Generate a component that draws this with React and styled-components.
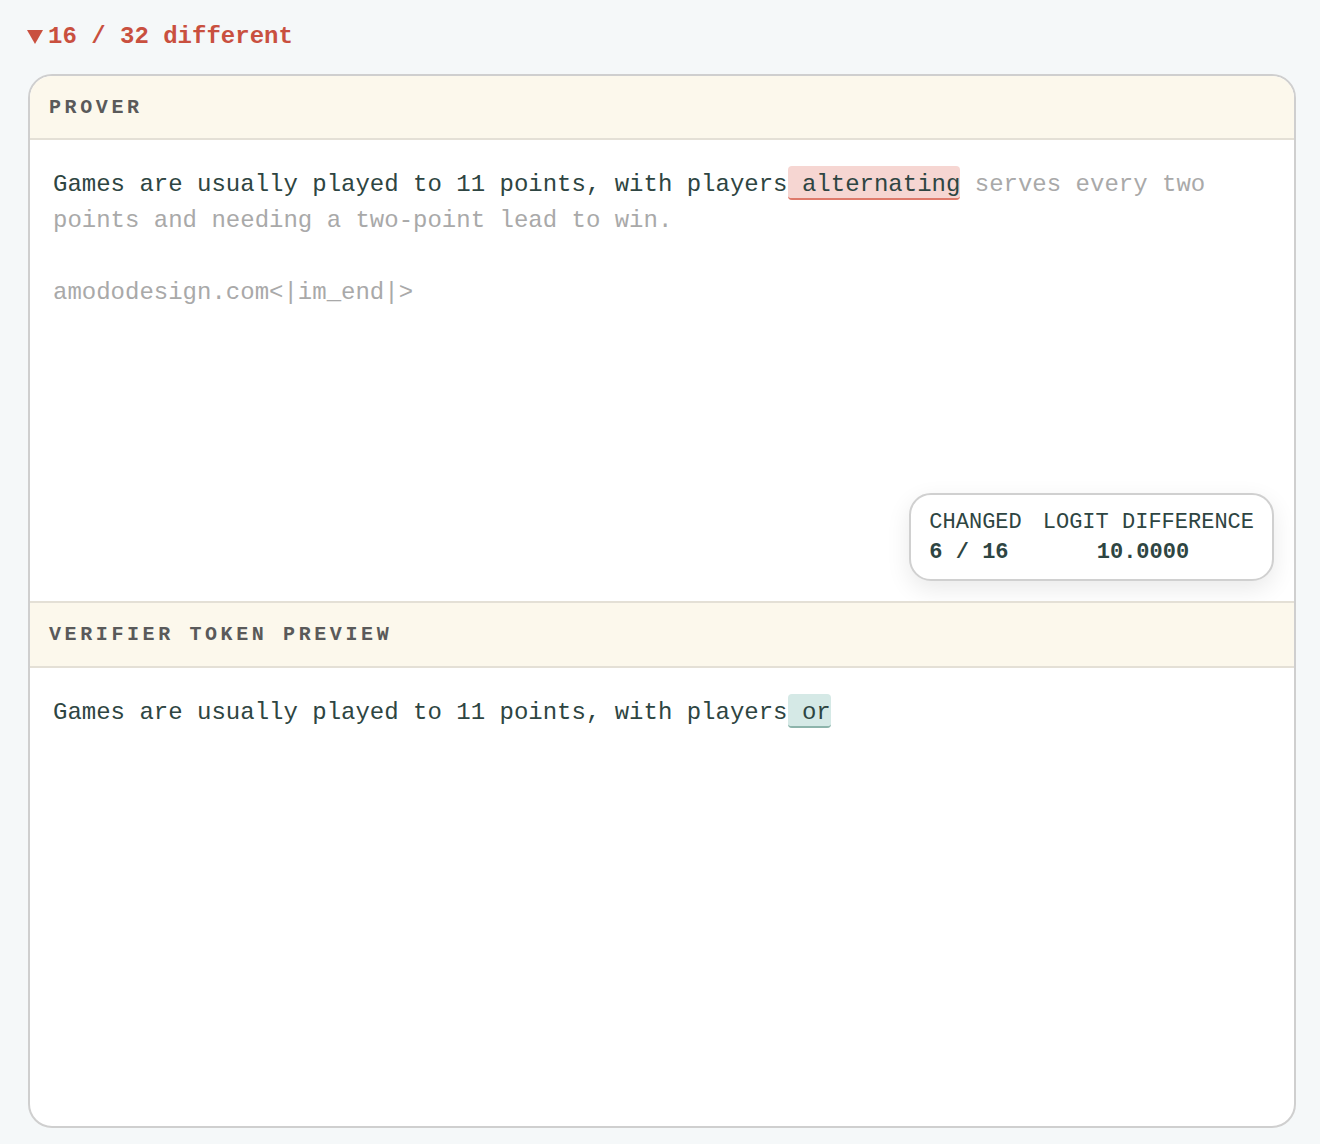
import React from 'react';
import styled, { createGlobalStyle } from 'styled-components';

const GlobalStyle = createGlobalStyle`
  html, body {
    margin: 0;
    padding: 0;
    background: #f5f8f9;
  }
  body {
    font-family: "Liberation Mono", "DejaVu Sans Mono", monospace;
    color: #2e4542;
  }
`;

const Page = styled.div`
  height: 100vh;
  box-sizing: border-box;
  display: flex;
  flex-direction: column;
  padding: 19px 24px 16px 28px;
`;

const Summary = styled.div`
  display: flex;
  align-items: center;
  height: 36px;
  margin: 0 0 19px -1px;
  color: #c9503f;
  font-size: 24px;
  font-weight: 700;
  line-height: 36px;
`;

const Caret = styled.span`
  width: 0;
  height: 0;
  border-left: 8px solid transparent;
  border-right: 8px solid transparent;
  border-top: 14px solid #c9503f;
  margin: 0 5px 0 0;
`;

const Card = styled.div`
  flex: 1;
  min-height: 0;
  display: flex;
  flex-direction: column;
  background: #fff;
  border: 2px solid #cfcfcf;
  border-radius: 24px;
  overflow: hidden;
`;

const Section = styled.section`
  flex: 1 1 0;
  min-height: 0;
  display: flex;
  flex-direction: column;
  position: relative;
`;

const Header = styled.div`
  flex: none;
  height: ${p => (p.divided ? 63 : 62)}px;
  display: flex;
  align-items: center;
  padding: 0 19px;
  background: #fcf8ec;
  border-top: ${p => (p.divided ? '2px solid #e4e0d6' : 'none')};
  border-bottom: 2px solid #e4e0d6;
  color: #5a5a5a;
  font-size: 20px;
  font-weight: 700;
  letter-spacing: 3.6px;
`;

const Body = styled.div`
  flex: 1;
  padding: 27px 23px;
  font-size: 24px;
  line-height: 36px;
  white-space: pre-wrap;
`;

const Faded = styled.span`
  color: #a9a9a9;
`;

const Token = styled.span`
  background: ${p => (p.tone === 'red' ? '#f6d6d2' : '#d5e9e6')};
  border-bottom: 2px solid ${p => (p.tone === 'red' ? '#de7a6b' : '#8db4ab')};
  border-radius: 4px;
  padding-top: 5px;
`;

const Stats = styled.div`
  position: absolute;
  right: 20px;
  bottom: 20px;
  display: grid;
  grid-template-columns: auto auto;
  column-gap: 21px;
  padding: 13px 18px 11px;
  background: #fff;
  border: 2px solid #d0d0d0;
  border-radius: 22px;
  box-shadow: 0 8px 24px rgba(0, 0, 0, 0.09);
  font-size: 22px;
  line-height: 30px;
`;

const Label = styled.div`
  color: #2e4542;
`;

const Value = styled.div`
  font-weight: 700;
  padding-left: ${p => p.indent || 0}px;
`;

export default function App() {
  return (
    <>
      <GlobalStyle />
      <Page>
        <Summary>
          <Caret />
          16 / 32 different
        </Summary>
        <Card>
          <Section>
            <Header>PROVER</Header>
            <Body>
              Games are usually played to 11 points, with players
              <Token tone="red"> alternating</Token>
              <Faded>
                {' serves every two points and needing a two-point lead to win.\n\namododesign.com<|im_end|>'}
              </Faded>
            </Body>
            <Stats>
              <Label>CHANGED</Label>
              <Label>LOGIT DIFFERENCE</Label>
              <Value>6 / 16</Value>
              <Value indent={54}>10.0000</Value>
            </Stats>
          </Section>
          <Section>
            <Header divided>VERIFIER TOKEN PREVIEW</Header>
            <Body>
              Games are usually played to 11 points, with players
              <Token tone="teal"> or</Token>
            </Body>
          </Section>
        </Card>
      </Page>
    </>
  );
}
